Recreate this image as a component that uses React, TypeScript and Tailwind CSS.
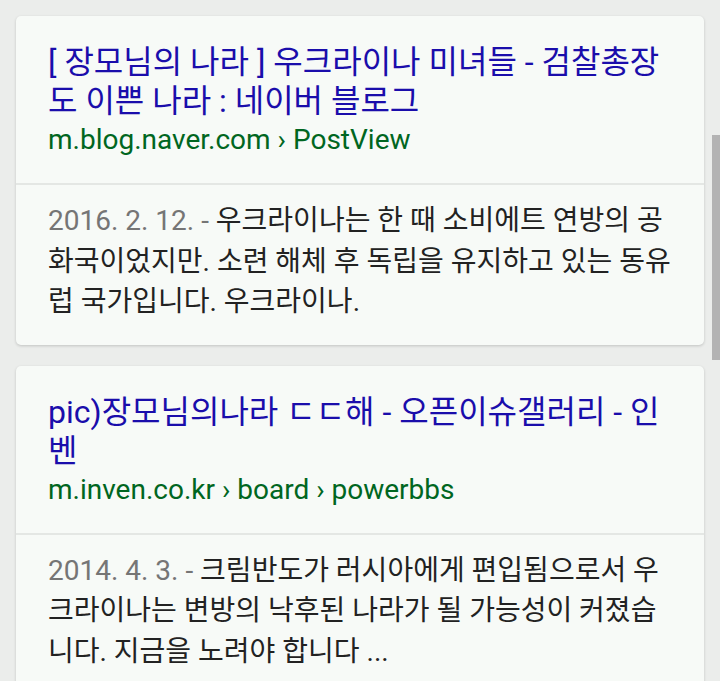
const FONT = 'font-[Roboto,"Noto_Sans_CJK_KR",sans-serif]'

interface Result {
  title: string
  url: string
  date: string
  snippet: string[]
}

// snippet lines are kept as the search page wrapped them
const results: Result[] = [
  {
    title: '[ 장모님의 나라 ] 우크라이나 미녀들 - 검찰총장도 이쁜 나라 : 네이버 블로그',
    url: 'm.blog.naver.com › PostView',
    date: '2016. 2. 12.',
    snippet: [
      '우크라이나는 한 때 소비에트 연방의 공',
      '화국이었지만. 소련 해체 후 독립을 유지하고 있는 동유',
      '럽 국가입니다. 우크라이나.',
    ],
  },
  {
    title: 'pic)장모님의나라 ㄷㄷ해 - 오픈이슈갤러리 - 인벤',
    url: 'm.inven.co.kr › board › powerbbs',
    date: '2014. 4. 3.',
    snippet: [
      '크림반도가 러시아에게 편입됨으로서 우',
      '크라이나는 변방의 낙후된 나라가 될 가능성이 커졌습',
      '니다. 지금을 노려야 합니다 ...',
    ],
  },
]

function ResultCard({ r }: { r: Result }) {
  return (
    <div className="rounded-[5px] bg-[#f7faf7] shadow-[0_1px_3px_rgba(0,0,0,0.18)]">
      <div className="border-b-2 border-[#e4e7e4] pl-8 pr-6 pt-[27px] pb-[24px]">
        <div className="text-[32px] leading-[39px] text-[#1a0dab]">{r.title}</div>
        <div className="text-[28px] leading-[38px] text-[#006621]">{r.url}</div>
      </div>
      <div className="pl-8 pr-4 pt-4 pb-[22px] text-[28px] leading-[40.5px] text-[#222222]">
        {r.snippet.map((line, i) => (
          <div key={i} className="whitespace-nowrap">
            {i === 0 ? <span className="text-[#757575]">{r.date} - </span> : null}
            {line}
          </div>
        ))}
      </div>
    </div>
  )
}

export default function App() {
  return (
    <div className={`relative min-h-[681px] w-[720px] overflow-hidden bg-[#ebedeb] ${FONT}`}>
      <div className="flex flex-col gap-[21px] px-4 pt-4">
        {results.map((r) => (
          <ResultCard key={r.url} r={r} />
        ))}
      </div>
      <div className="absolute right-0 top-[135px] h-[225px] w-2 bg-[#b3b3b3]" />
    </div>
  )
}
